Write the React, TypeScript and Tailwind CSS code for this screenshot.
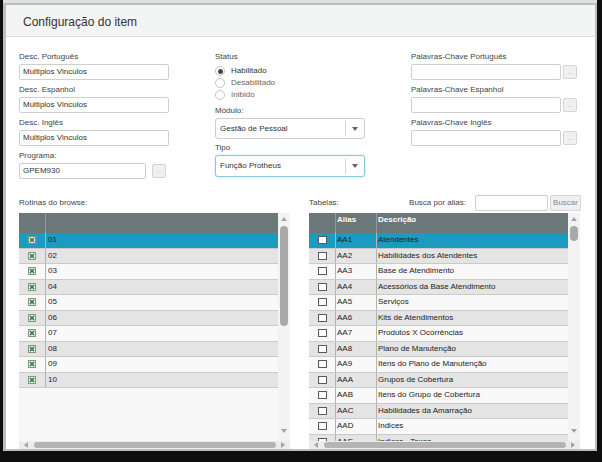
import React from "react";

function Label({ children, className = "" }: { children: React.ReactNode; className?: string }) {
  return <div className={"h-[13px] text-[8px] leading-[12px] text-[#444] whitespace-nowrap " + className}>{children}</div>;
}

function TextInput({ value = "", className = "w-[150px]" }: { value?: string; className?: string }) {
  return (
    <div className={"h-[16px] border border-[#cfcfcf] rounded-[2px] bg-white text-[8px] leading-[14px] px-[3px] text-[#333] " + className}>
      {value}
    </div>
  );
}

function DotsButton() {
  return (
    <div className="w-[14px] h-[14px] border border-[#d4d4d4] rounded-[2px] bg-[#f0f0f0] flex items-center justify-center text-[6px] leading-none text-[#999]">
      ...
    </div>
  );
}

function Radio({ label, checked = false }: { label: string; checked?: boolean }) {
  return (
    <div className="h-[12px] flex items-center">
      <div className="w-[10px] h-[10px] rounded-full border border-[#c4c4c4] bg-white flex items-center justify-center">
        {checked && <div className="w-[5px] h-[5px] rounded-full bg-[#3b4a5c]" />}
      </div>
      <span className={"ml-[6px] text-[8px] " + (checked ? "text-[#333]" : "text-[#666]")}>{label}</span>
    </div>
  );
}

function Select({ value, focused = false }: { value: string; focused?: boolean }) {
  return (
    <div
      className={
        "w-[150px] border rounded-[3px] flex items-center bg-white " +
        (focused ? "h-[22px] border-[#86c9e0] shadow-[0_0_2px_#a8dcef]" : "h-[21px] border-[#cdcdcd]")
      }
    >
      <div className="flex-1 pl-[4px] text-[8px] text-[#333]">{value}</div>
      <div className="w-px h-[15px] bg-[#d5d5d5]" />
      <div className="w-[18px] flex justify-center">
        <svg width="6" height="4" viewBox="0 0 6 4">
          <path d="M0 0H6L3 4Z" fill="#666" />
        </svg>
      </div>
    </div>
  );
}

function UpArrow() {
  return (
    <svg width="6" height="4" viewBox="0 0 6 4">
      <path d="M0 4H6L3 0Z" fill="#a3a3a3" />
    </svg>
  );
}
function DownArrow() {
  return (
    <svg width="6" height="4" viewBox="0 0 6 4">
      <path d="M0 0H6L3 4Z" fill="#a3a3a3" />
    </svg>
  );
}

function VScroll({ thumb }: { thumb: string }) {
  return (
    <div className="w-[12px] bg-[#f3f3f3] flex flex-col items-center">
      <div className="h-[12px] flex items-center justify-center">
        <UpArrow />
      </div>
      <div className={"w-[8px] rounded-[4px] bg-[#a9a9a9] mt-[1px] " + thumb} />
      <div className="flex-1" />
      <div className="h-[20px] flex items-center justify-center">
        <DownArrow />
      </div>
    </div>
  );
}

function HScroll() {
  return (
    <div className="h-[8px] flex items-center bg-[#ececec]">
      <div className="w-[14px] flex justify-center">
        <svg width="4" height="6" viewBox="0 0 4 6">
          <path d="M4 0V6L0 3Z" fill="#a3a3a3" />
        </svg>
      </div>
      <div className="w-[242px] h-[6px] rounded-[3px] bg-[#b4b4b4] ml-[1px]" />
      <div className="flex-1 flex justify-center">
        <svg width="4" height="6" viewBox="0 0 4 6">
          <path d="M0 0V6L4 3Z" fill="#a3a3a3" />
        </svg>
      </div>
    </div>
  );
}

function XCheck() {
  return (
    <svg width="8" height="8" viewBox="0 0 8 8">
      <rect x="0.5" y="0.5" width="7" height="7" fill="#dbe6dc" stroke="#7d9a82" />
      <path d="M2 2L6 6M6 2L2 6" stroke="#2f6b3b" strokeWidth="1.2" />
    </svg>
  );
}

function rowBg(i: number) {
  if (i === 0) return "bg-[#1c9ac0]";
  return i % 2 === 1 ? "bg-[#e4e4e4]" : "bg-[#f9f9f9]";
}

const rotinas = ["01", "02", "03", "04", "05", "06", "07", "08", "09", "10"];

const tabelas: [string, string][] = [
  ["AA1", "Atendentes"],
  ["AA2", "Habilidades dos Atendentes"],
  ["AA3", "Base de Atendimento"],
  ["AA4", "Acessórios da Base Atendimento"],
  ["AA5", "Serviços"],
  ["AA6", "Kits de Atendimentos"],
  ["AA7", "Produtos X Ocorrências"],
  ["AA8", "Plano de Manutenção"],
  ["AA9", "Itens do Plano de Manutenção"],
  ["AAA", "Grupos de Cobertura"],
  ["AAB", "Itens do Grupo de Cobertura"],
  ["AAC", "Habilidades da Amarração"],
  ["AAD", "Indices"],
  ["AAE", "Indices - Taxas"],
];

function LeftGrid() {
  return (
    <div className="w-[271px] h-[236px] flex flex-col">
      <div className="flex-1 flex min-h-0">
        <div className="flex-1 flex flex-col bg-[#f7f7f7] overflow-hidden">
          <div className="h-[20px] flex bg-[#6c7779] shrink-0">
            <div className="w-[27px] border-r border-[#8f9a9c]" />
            <div className="flex-1" />
          </div>
          {rotinas.map((r, i) => (
            <div key={r} className={"h-[15.5px] flex border-b border-[#cacaca] shrink-0 " + rowBg(i)}>
              <div className="w-[27px] border-r border-[#b3b3b3] flex items-center justify-center">
                <XCheck />
              </div>
              <div className="flex-1 pl-[2px] text-[8px] leading-[14px] text-[#222]">{r}</div>
            </div>
          ))}
        </div>
        <VScroll thumb="h-[100px]" />
      </div>
      <HScroll />
    </div>
  );
}

function RightGrid() {
  return (
    <div className="w-[271px] h-[236px] flex flex-col">
      <div className="flex-1 flex min-h-0">
        <div className="flex-1 flex flex-col bg-[#f7f7f7] overflow-hidden">
          <div className="h-[20px] flex bg-[#6c7779] shrink-0 text-[8px] font-bold text-white leading-[12px]">
            <div className="w-[27px] border-r border-[#8f9a9c]" />
            <div className="w-[41px] border-r border-[#8f9a9c] pl-[1px] pt-[1px]">Alias</div>
            <div className="flex-1 pl-[1px] pt-[1px]">Descrição</div>
          </div>
          {tabelas.map(([a, d], i) => (
            <div key={a} className={"h-[15.5px] flex border-b border-[#cacaca] shrink-0 text-[8px] leading-[14px] text-[#222] " + rowBg(i)}>
              <div className="w-[27px] border-r border-[#b3b3b3] flex items-center justify-center">
                <div className="w-[9px] h-[8px] border border-[#5a5a5a] bg-white" />
              </div>
              <div className="w-[41px] border-r border-[#b3b3b3] pl-[1px]">{a}</div>
              <div className="flex-1 pl-[1px] whitespace-nowrap">{d}</div>
            </div>
          ))}
        </div>
        <VScroll thumb="h-[15px]" />
      </div>
      <HScroll />
    </div>
  );
}

export default function App() {
  return (
    <div className="w-[602px] h-[462px] bg-[#0e0e0e] overflow-hidden font-['Liberation_Sans',Arial,sans-serif]">
      <div className="ml-[3px] w-[594px] h-[451px] bg-[#bdbdbd] border-t-[3px] border-[#e0e0e0] pt-[2px] pl-[3px] pr-[2px] pb-[2px]">
        <div className="bg-white h-full flex flex-col overflow-hidden">
          <div className="h-[32px] shrink-0 bg-[#f3f4f4] border-b border-[#dcdcdc] flex items-center pl-[17px] pt-[3px] text-[12px] text-[#333]">
            Configuração do item
          </div>
          <div className="flex-1 pt-[14px] pl-[13px]">
            <div className="flex items-start">
              {/* left column */}
              <div className="w-[150px]">
                <Label>Desc. Português</Label>
                <TextInput value="Multiplos Vinculos" />
                <Label className="mt-[4px]">Desc. Espanhol</Label>
                <TextInput value="Multiplos Vinculos" />
                <Label className="mt-[4px]">Desc. Inglês</Label>
                <TextInput value="Multiplos Vinculos" />
                <Label className="mt-[4px]">Programa:</Label>
                <div className="flex items-center">
                  <TextInput value="GPEM930" className="w-[127px] h-[15px]" />
                  <div className="ml-[6px]">
                    <DotsButton />
                  </div>
                </div>
              </div>
              {/* middle column */}
              <div className="w-[150px] ml-[46px]">
                <Label>Status</Label>
                <div className="mt-[1px]">
                  <Radio label="Habilitado" checked />
                  <Radio label="Desabilitado" />
                  <Radio label="Inibido" />
                </div>
                <Label className="mt-[4px]">Módulo:</Label>
                <Select value="Gestão de Pessoal" />
                <Label className="mt-[3px]">Tipo</Label>
                <Select value="Função Protheus" focused />
              </div>
              {/* right column */}
              <div className="w-[167px] ml-[46px]">
                <Label>Palavras-Chave Português</Label>
                <div className="flex items-center">
                  <TextInput />
                  <div className="ml-[2px]">
                    <DotsButton />
                  </div>
                </div>
                <Label className="mt-[4px]">Palavras-Chave Espanhol</Label>
                <div className="flex items-center">
                  <TextInput />
                  <div className="ml-[2px]">
                    <DotsButton />
                  </div>
                </div>
                <Label className="mt-[4px]">Palavras-Chave Inglês</Label>
                <div className="flex items-center">
                  <TextInput />
                  <div className="ml-[2px]">
                    <DotsButton />
                  </div>
                </div>
              </div>
            </div>
            {/* bottom */}
            <div className="flex mt-[16px]">
              <div className="w-[271px]">
                <div className="h-[16px] flex items-center text-[8px] text-[#444]">Rotinas do browse:</div>
                <div className="mt-[2px]">
                  <LeftGrid />
                </div>
              </div>
              <div className="w-[272px] ml-[19px]">
                <div className="h-[16px] flex items-center text-[8px] text-[#444]">
                  <span>Tabelas:</span>
                  <span className="ml-auto mr-[9px]">Busca por alias:</span>
                  <div className="w-[73px] h-[16px] border border-[#cfcfcf] rounded-[2px] bg-white" />
                  <div className="ml-[2px] w-[31px] h-[16px] border border-[#d4d4d4] rounded-[2px] bg-[#f0f0f0] flex items-center justify-center text-[8px] text-[#888]">
                    Buscar
                  </div>
                </div>
                <div className="mt-[2px]">
                  <RightGrid />
                </div>
              </div>
            </div>
          </div>
        </div>
      </div>
    </div>
  );
}
